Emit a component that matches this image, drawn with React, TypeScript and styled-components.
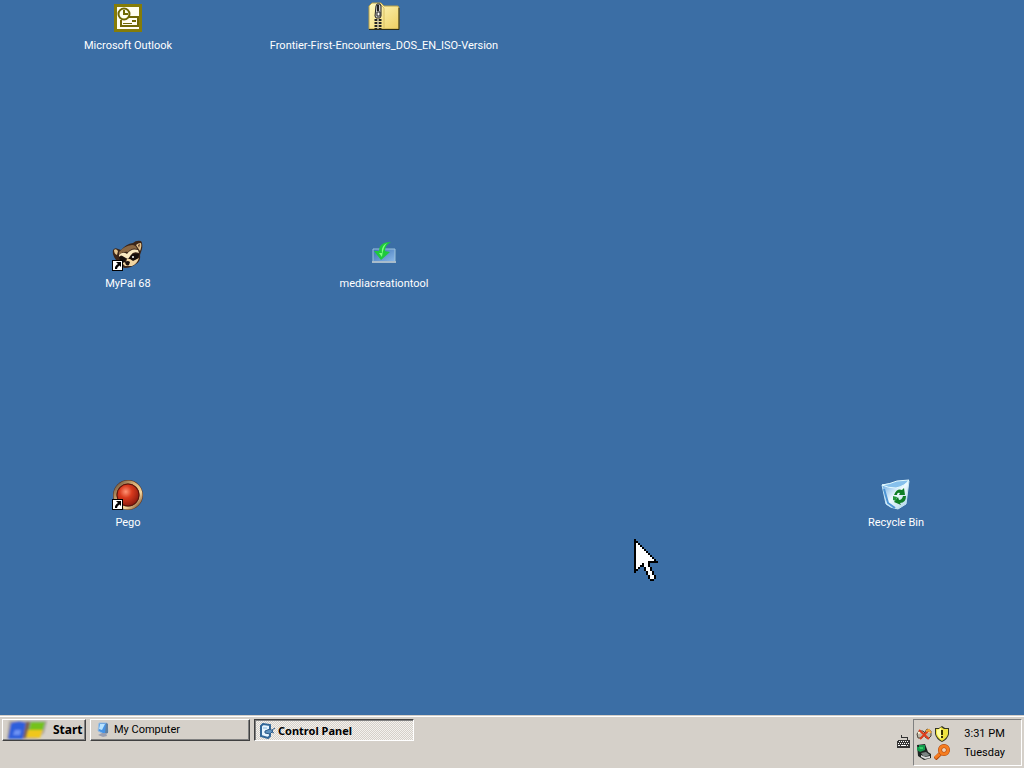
import type { ReactNode } from "react";
import styled, { createGlobalStyle, css } from "styled-components";

const GlobalStyle = createGlobalStyle`
  * {
    box-sizing: border-box;
  }
  body {
    margin: 0;
    font-family: Roboto, "Noto Sans", sans-serif;
    font-size: 11px;
    line-height: 14px;
    cursor: default;
  }
  svg {
    display: block;
    flex-shrink: 0;
  }
  button {
    font: inherit;
    color: inherit;
    padding: 0;
    border: 0;
    background: none;
  }
`;

const Screen = styled.div`
  position: relative;
  display: flex;
  flex-direction: column;
  min-height: 100vh;
  background: #3b6ea5;
`;

const Desktop = styled.main`
  flex: 1;
  display: grid;
  grid-template-columns: repeat(4, 1fr);
  grid-template-rows: repeat(3, 1fr);
`;

const Shortcut = styled.button<{ $col: number; $row: number }>`
  grid-column: ${(p) => p.$col};
  grid-row: ${(p) => p.$row};
  justify-self: center;
  align-self: start;
  display: flex;
  flex-direction: column;
  align-items: center;
  gap: 6px;
  padding-top: 1px;
  color: #fff;
  white-space: nowrap;
`;

const Taskbar = styled.footer`
  display: flex;
  align-items: flex-start;
  gap: 4px;
  height: 53px;
  padding: 1px 2px 2px;
  background: #d5d0c9;
  border-top: 1px solid #d5d0c9;
  box-shadow: inset 0 1px 0 #fff;
`;

const raised = css`
  border: 1px solid;
  border-color: #fff #404040 #404040 #fff;
  box-shadow: inset -1px -1px 0 #808080;
`;

const pressed = css`
  padding-top: 2px;
  border: 1px solid;
  border-color: #404040 #fff #fff #404040;
  box-shadow: inset 1px 1px 0 #808080;
  background: repeating-conic-gradient(#f4f2ee 0 25%, #d5d0c9 0 50%) 0 0 / 2px 2px;
  font-family: "Noto Sans", sans-serif;
  font-weight: bold;
`;

const TaskButton = styled.button<{ $active?: boolean }>`
  display: flex;
  align-items: center;
  gap: 3px;
  width: 160px;
  height: 22px;
  margin-top: 2px;
  padding: 0 4px;
  color: #000;
  ${(p) => (p.$active ? pressed : raised)}
`;

const StartButton = styled(TaskButton)`
  gap: 5px;
  width: 84px;
  padding: 0 2px;
  font-family: "Noto Sans", sans-serif;
  font-size: 12px;
  font-weight: bold;
`;

const Tray = styled.div`
  display: flex;
  align-items: center;
  gap: 3px;
  height: 100%;
  margin-left: auto;
`;

const TrayBox = styled.div`
  display: flex;
  align-items: center;
  justify-content: space-between;
  width: 109px;
  height: 47px;
  margin-top: 2px;
  padding: 0 16px 0 2px;
  border: 1px solid;
  border-color: #808080 #fff #fff #808080;
`;

const TrayIcons = styled.div`
  display: grid;
  grid-template-columns: 16px 16px;
  gap: 2px;
`;

const Clock = styled.time`
  line-height: 19px;
  text-align: center;
`;

const Pointer = styled.svg`
  position: absolute;
  left: 634px;
  top: 539px;
  pointer-events: none;
`;

const LinkArrow = () => (
  <g>
    <path d="M0 21h11v11H0z" fill="#000" />
    <path d="M1 22h9v9H1z" fill="#fff" />
    <path d="M4 23h5v5L7.500 26.500Q5 28 5 30H3Q2.500 27 6 25z" fill="#000" />
  </g>
);

const OutlookIcon = () => (
  <svg width="32" height="32" viewBox="0 0 32 32">
    <path d="M2 3h28v28H2z" fill="#857c08" />
    <path d="M5 6h22v22H5z" fill="#fffef0" />
    <path d="M14 16h12v9H9v-6" fill="#fffef0" stroke="#6f6804" strokeWidth="2" />
    <path d="M20 19h4v2h-4zM11 22h9v1h-9z" fill="#6f6804" />
    <circle cx="12" cy="13" r="5.500" fill="#fffef0" stroke="#6f6804" strokeWidth="2" />
    <path d="M12 9v4h4" fill="none" stroke="#6f6804" strokeWidth="2" />
  </svg>
);

const ZipIcon = () => (
  <svg width="32" height="32" viewBox="0 0 32 32">
    <defs>
      <linearGradient id="folder" x2="1" y2="1">
        <stop stopColor="#fffbc4" />
        <stop offset="1" stopColor="#efcf62" />
      </linearGradient>
    </defs>
    <path d="M1 28V5l3-3h9l3 3h14l1 2v21z" fill="url(#folder)" stroke="#b9a046" />
    <path d="M31 7v21.500H1" fill="none" stroke="#2c2c18" />
    <path d="M13 4l3 3v21" fill="none" stroke="#d8bf62" />
    <path d="M8 5l1-2h3l1 2v10l-1 2H8l-1-2z" fill="#c9c9c9" stroke="#222" />
    <path d="M10 4v6" stroke="#222" strokeWidth="2" />
    <path d="M9 11h3v4H9z" fill="#fff" stroke="#222" />
    <path d="M8 18v10M12 18v10" stroke="#222" strokeWidth="3" strokeDasharray="2 1" />
    <path d="M10 18v10" stroke="#bbb" strokeWidth="1" />
  </svg>
);

const RaccoonIcon = () => (
  <svg width="32" height="32" viewBox="0 0 32 32">
    <g transform="translate(0 1)">
      <path d="M1 10q2-3 5-1l3 1q5-6 12-7 3-3 8-2 2 2 1 8l-2 6q1 6-4 9-5 4-11 4-6-1-9-8-4-5-3-10z" fill="#3b2519" />
      <path d="M2 10q2-2 4 1l-1 4q-3-1-3-5M24 5q2-2 5-2 1 3-1 8z" fill="#e5c58e" />
      <path d="M26 5l2-1-1 4z" fill="#563222" />
      <path d="M7 12q5-6 13-7 4 0 5 4-5-2-9 3-5-1-9 3z" fill="#8a6743" />
      <path d="M7 15q4-4 8-1 4-6 11-4l1 3q-6-2-8 2l-3 4-4-2q-3-3-5 0z" fill="#fbe9c2" />
      <path d="M7 17q4-2 7 2l-2 4q-4 0-5-6M17 19q2-7 10-5 0 5-6 7z" fill="#170f0c" />
      <path d="M15 19l3 0 3 2 6-3q-2 6-7 8l-7 0-3-3 4-1z" fill="#f2d5a1" />
      <circle cx="21" cy="17" r="1" fill="#fff" />
      <path d="M13 22q3-2 5 0l-1 3q-3 2-4-3" fill="#1c1210" />
    </g>
    <LinkArrow />
  </svg>
);

const DownloadIcon = () => (
  <svg width="32" height="32" viewBox="0 0 32 32">
    <defs>
      <linearGradient id="tray" x2="1" y2="1">
        <stop stopColor="#3a70b4" />
        <stop offset="1" stopColor="#8bb9e9" />
      </linearGradient>
    </defs>
    <path d="M5 10h22v13H5z" fill="url(#tray)" stroke="#9dc2da" />
    <path d="M4 22h24v2H4z" fill="#a9bccb" />
    <path d="M23 3Q11 3 11 12l-5 0 7 9 9-8-5-1q0-6 6-9z" fill="#1fc93c" />
    <path d="M19 4q-6 3-5 10l-3 0 3 4q1-10 5-14" fill="#7dff7e" />
  </svg>
);

const PegoIcon = () => (
  <svg width="32" height="32" viewBox="0 0 32 32">
    <defs>
      <linearGradient id="ring" x2="1" y2="1">
        <stop stopColor="#5f4c38" />
        <stop offset=".4" stopColor="#d9b078" />
        <stop offset=".7" stopColor="#f3d59c" />
        <stop offset="1" stopColor="#6d3b1b" />
      </linearGradient>
      <radialGradient id="ball" cx=".4" cy=".35" r=".7">
        <stop stopColor="#ff9475" />
        <stop offset=".4" stopColor="#d93a1d" />
        <stop offset="1" stopColor="#86170d" />
      </radialGradient>
    </defs>
    <circle cx="16" cy="17" r="15" fill="#5c2f17" />
    <circle cx="16" cy="17" r="13" fill="none" stroke="url(#ring)" strokeWidth="3" />
    <circle cx="16" cy="17" r="11" fill="url(#ball)" stroke="#5a120b" />
    <LinkArrow />
  </svg>
);

const RecycleIcon = () => (
  <svg width="32" height="32" viewBox="0 0 32 32">
    <defs>
      <linearGradient id="bin" x2="1" y2="1">
        <stop stopColor="#5aa0e0" />
        <stop offset=".5" stopColor="#eefaff" />
        <stop offset="1" stopColor="#a9cfe4" />
      </linearGradient>
    </defs>
    <path d="M2 7l27-4-3 23-8 5q-8-1-12-5z" fill="url(#bin)" stroke="#c5e6f6" />
    <path d="M2 7q8-1 15-4l12-1q-4 6-13 8-8 0-14-3" fill="#86c0ec" stroke="#e3faff" />
    <path d="M4 11l4 14 7 5" fill="none" stroke="#4b93d4" strokeWidth="2" />
    <path d="M14 17q3-7 8-5l2-2 1 7h-6l1-2q-3-1-3 2zM26 18q0 7-6 7l1 2-7-3 4-5 1 3q3 0 4-4z" fill="#107e26" />
    <path d="M13 18l4 1-1 4-3-1z" fill="#24983b" />
  </svg>
);

const StartLogo = () => (
  <svg width="43" height="20" viewBox="0 0 43 20">
    <defs>
      <filter id="soft"><feGaussianBlur stdDeviation=".9" /></filter>
    </defs>
    <g filter="url(#soft)">
      <path d="M4 1h38l-3 12-7 6H2z" fill="#a8a29a" />
      <path d="M6 3q9-3 15 0l-3 16H3z" fill="#2f5fdc" />
      <path d="M10 10h6l-1 5H8z" fill="#6d93f4" />
      <path d="M21 2h4l-3 16h-4z" fill="#7d6250" />
      <path d="M26 2h14l-2 8H24z" fill="#74c21c" />
      <path d="M23 10h15l-3 8H21z" fill="#f0c71a" />
    </g>
  </svg>
);

const ComputerIcon = () => (
  <svg width="16" height="16" viewBox="0 0 16 16">
    <path d="M4 1l8 0 1 9-4 2-6-3z" fill="#4693e5" stroke="#9dbede" />
    <path d="M5 2h5l-3 6-3-1z" fill="#b9e3ff" />
    <path d="M11 1l2 1v9l-3 1z" fill="#607e9e" />
    <path d="M7 11l4 0 1 3-4 1-5-2z" fill="#9a9fb1" />
  </svg>
);

const ControlPanelIcon = () => (
  <svg width="16" height="16" viewBox="0 0 16 16">
    <path d="M2 3l2-2 7 1v11l-2 2-7-2z" fill="#e8f6ff" stroke="#326899" strokeWidth="2" />
    <path d="M6 8l5-2 3 2-3 3-5-1z" fill="#5f93bf" stroke="#2c5a88" />
    <path d="M13 7l3-2M13 9l2 1" stroke="#2c5a88" />
    <path d="M4 5l4 0" stroke="#88bce2" />
  </svg>
);

const KeyboardIcon = () => (
  <svg width="13" height="14" viewBox="0 0 13 14" shapeRendering="crispEdges">
    <path d="M4 0h1v2h6v3h-1V3H4z" fill="#333" />
    <path d="M1 5h12v8H0V6z" fill="#333" />
    <path d="M2 6h1v1H2zM4 6h1v1H4zM6 6h1v1H6zM8 6h1v1H8zM10 6h1v1h-1zM1 8h1v1H1zM3 8h1v1H3zM5 8h1v1H5zM7 8h1v1H7zM9 8h1v1H9zM11 8h1v1h-1zM1 10h2v1H1zM4 10h5v1H4zM10 10h1v1h-1z" fill="#fff" />
  </svg>
);

const NetworkIcon = () => (
  <svg width="16" height="16" viewBox="0 0 16 16">
    <path d="M1 8l2-3 4 0 2 2-3 5H2zM9 6l2-3 4 2v5l-3 3-3-2z" fill="#bdb7a8" stroke="#4d4439" />
    <path d="M2 7l3-1M11 5l3 1" stroke="#fff3d8" strokeWidth="2" />
    <path d="M3 4l10 9M13 4l-9 9" stroke="#df3d1c" strokeWidth="2" />
    <path d="M10 5l3-1 2 3" fill="none" stroke="#eda73a" strokeWidth="2" />
  </svg>
);

const ShieldIcon = () => (
  <svg width="16" height="16" viewBox="0 0 16 16">
    <path d="M8 0l3 2 4 0v6q-1 5-7 8-6-3-7-8V2h4z" fill="#343420" />
    <path d="M7 1l3 2 4 0v5q-1 4-6 7-5-3-6-7V3h3z" fill="#efe340" />
    <path d="M3 4l4-2v11Q3 10 3 7z" fill="#fffda0" />
    <path d="M7 4h2v5H7zM7 10h2v2H7z" fill="#353000" />
  </svg>
);

const EjectIcon = () => (
  <svg width="16" height="16" viewBox="0 0 16 16">
    <path d="M1 1l8-1 3 8 3 2v4l-7 2-6-4z" fill="#1d2422" />
    <path d="M1 3h2V1h6v5l-5 2-3-2z" fill="#14994c" />
    <path d="M3 3h4v2H4z" fill="#36ce69" />
    <path d="M5 9l5-1 4 3-6 2z" fill="#7c8584" />
    <path d="M5 11l4 2 5-1v2l-5 1-4-2z" fill="#ddd" />
  </svg>
);

const SearchIcon = () => (
  <svg width="16" height="16" viewBox="0 0 16 16">
    <path d="M7 9l-6 6" stroke="#a7420c" strokeWidth="4" />
    <path d="M7 9l-6 5" stroke="#f47b20" strokeWidth="3" />
    <circle cx="10" cy="6" r="4" fill="#f0d1b5" stroke="#a7420c" strokeWidth="4" />
    <circle cx="10" cy="6" r="4" fill="none" stroke="#f57d20" strokeWidth="3" />
  </svg>
);

// X = outline, . = fill
const pointerRows = [
  "X",
  "XX",
  "X.X",
  "X..X",
  "X...X",
  "X....X",
  "X.....X",
  "X......X",
  "X.......X",
  "X........X",
  "X.........X",
  "X......XXXXX",
  "X...X..X",
  "X..XX..X",
  "X.X  X..X",
  "XX   X..X",
  "X     X..X",
  "      X..X",
  "       X..X",
  "       X..X",
  "        XX",
];

const pointerPath = (mark: string) =>
  pointerRows
    .flatMap((row, y) => [...row].map((c, x) => (c === mark ? `M${x} ${y}h1v1h-1z` : "")))
    .join("");

interface Item {
  name: string;
  col: number;
  row: number;
  icon: ReactNode;
}

const items: Item[] = [
  { name: "Microsoft Outlook", col: 1, row: 1, icon: <OutlookIcon /> },
  { name: "Frontier-First-Encounters_DOS_EN_ISO-Version", col: 2, row: 1, icon: <ZipIcon /> },
  { name: "MyPal 68", col: 1, row: 2, icon: <RaccoonIcon /> },
  { name: "mediacreationtool", col: 2, row: 2, icon: <DownloadIcon /> },
  { name: "Pego", col: 1, row: 3, icon: <PegoIcon /> },
  { name: "Recycle Bin", col: 4, row: 3, icon: <RecycleIcon /> },
];

export default function App() {
  return (
    <Screen>
      <GlobalStyle />
      <Desktop>
        {items.map((item) => (
          <Shortcut key={item.name} $col={item.col} $row={item.row}>
            {item.icon}
            <span>{item.name}</span>
          </Shortcut>
        ))}
      </Desktop>
      <Taskbar>
        <StartButton>
          <StartLogo />
          Start
        </StartButton>
        <TaskButton>
          <ComputerIcon />
          My Computer
        </TaskButton>
        <TaskButton $active>
          <ControlPanelIcon />
          Control Panel
        </TaskButton>
        <Tray>
          <KeyboardIcon />
          <TrayBox>
            <TrayIcons>
              <NetworkIcon />
              <ShieldIcon />
              <EjectIcon />
              <SearchIcon />
            </TrayIcons>
            <Clock>
              3:31 PM
              <br />
              Tuesday
            </Clock>
          </TrayBox>
        </Tray>
      </Taskbar>
      <Pointer width="24" height="42" viewBox="0 0 12 21" shapeRendering="crispEdges">
        <path d={pointerPath("X")} fill="#000" />
        <path d={pointerPath(".")} fill="#fff" />
      </Pointer>
    </Screen>
  );
}
